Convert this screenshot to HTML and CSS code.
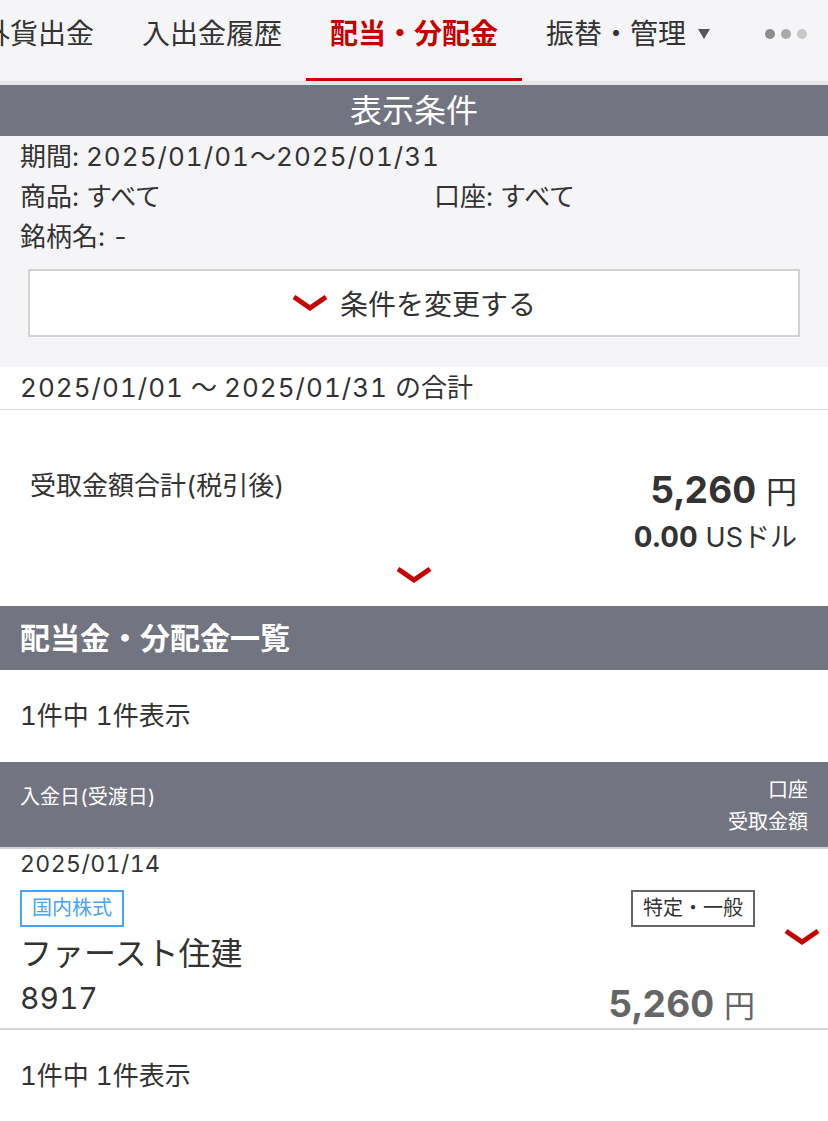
FILE: index.html
```html
<!DOCTYPE html>
<html lang="ja">
<head>
    <meta charset="UTF-8">
    <meta name="viewport" content="width=device-width, initial-scale=1.0">
    <title>配当・分配金</title>
    <link rel="stylesheet" href="styles.css">
</head>
<body>

    <nav class="tabs">
        <ul class="tab-list">
            <li class="tab">外貨出金</li>
            <li class="tab">入出金履歴</li>
            <li class="tab active">配当・分配金</li>
            <li class="tab">振替・管理<svg class="caret" viewBox="0 0 12 10"><polygon points="0,0 12,0 6,10"/></svg></li>
        </ul>
        <div class="more-dots"><span></span><span></span><span></span></div>
    </nav>

    <section class="conditions">
        <h2 class="bar-title">表示条件</h2>
        <div class="cond-body">
            <p>期間: <span class="num">2025/01/01</span>〜<span class="num">2025/01/31</span></p>
            <div class="cond-row">
                <p>商品: すべて</p>
                <p>口座: すべて</p>
            </div>
            <p>銘柄名: -</p>
            <button class="change-btn">
                <svg class="chevron" viewBox="0 0 36 18"><polyline points="2,3 18,14 34,3"/></svg>
                <span>条件を変更する</span>
            </button>
        </div>
    </section>

    <div class="range-total"><span class="num">2025/01/01</span> 〜 <span class="num">2025/01/31</span> の合計</div>

    <section class="summary">
        <div class="summary-main">
            <p class="summary-label">受取金額合計(税引後)</p>
            <div class="amounts">
                <p class="amount">5,260 <span class="unit">円</span></p>
                <p class="amount-sub">0.00 <span class="unit">USドル</span></p>
            </div>
        </div>
        <div class="summary-toggle">
            <svg class="chevron" viewBox="0 0 36 18"><polyline points="2,3 18,14 34,3"/></svg>
        </div>
    </section>

    <section class="list">
        <h2 class="list-title">配当金・分配金一覧</h2>
        <p class="count">1件中 1件表示</p>

        <div class="list-head">
            <span class="head-left">入金日(受渡日)</span>
            <div class="head-right">
                <span>口座</span>
                <span>受取金額</span>
            </div>
        </div>

        <div class="item">
            <div class="item-left">
                <p class="item-date"><span class="num">2025/01/14</span></p>
                <span class="tag tag-blue">国内株式</span>
                <p class="item-name">ファースト住建</p>
                <p class="item-code">8917</p>
            </div>
            <div class="item-right">
                <span class="tag tag-gray">特定・一般</span>
                <p class="item-amount">5,260 <span class="unit">円</span></p>
            </div>
            <svg class="chevron item-toggle" viewBox="0 0 36 18"><polyline points="2,3 18,14 34,3"/></svg>
        </div>

        <p class="count">1件中 1件表示</p>
    </section>

</body>
</html>
```

FILE: styles.css
```css
* {
    box-sizing: border-box;
}
body {
    margin: 0;
    font-family: Inter, "Noto Sans CJK JP", sans-serif;
    font-variant-numeric: tabular-nums;
    color: #333;
    background-color: #fff;
}
p {
    margin: 0;
}
.num {
    letter-spacing: 0.04em;
}

/* top tabs */
.tabs {
    display: flex;
    align-items: flex-start;
    height: 85px;
    background-color: #f5f5f7;
    border-bottom: 4px solid #e6e6e8;
    overflow: hidden;
    white-space: nowrap;
}
.tab-list {
    display: flex;
    margin: 0 0 0 -42px;
    padding: 0;
    list-style: none;
}
.tab {
    display: flex;
    align-items: flex-start;
    height: 81px;
    padding: 14px 24px 0;
    font-size: 28px;
    line-height: 40px;
    border-bottom: 3px solid transparent;
}
.tab.active {
    color: #c40000;
    font-weight: bold;
    border-bottom-color: #c40000;
}
.caret {
    width: 12px;
    height: 10px;
    margin: 15px 0 0 12px;
    fill: #555;
}
.more-dots {
    display: flex;
    gap: 6px;
    margin: 29px 0 0 31px;
}
.more-dots span {
    width: 10px;
    height: 10px;
    border-radius: 50%;
    background-color: #8c8c8c;
}
.more-dots span:nth-child(2) {
    background-color: #a9a9a9;
}
.more-dots span:nth-child(3) {
    background-color: #c8c8c8;
}

/* conditions */
.bar-title {
    margin: 0;
    height: 51px;
    background-color: #737482;
    color: #fff;
    font-size: 32px;
    font-weight: normal;
    line-height: 51px;
    text-align: center;
}
.cond-body {
    padding: 1px 20px 30px;
    background-color: #f5f5f7;
    font-size: 26px;
    line-height: 40px;
}
.cond-row {
    display: grid;
    grid-template-columns: 1fr 1fr;
    column-gap: 40px;
}
.change-btn {
    display: flex;
    align-items: center;
    justify-content: center;
    gap: 12px;
    width: calc(100% - 16px);
    height: 68px;
    margin: 12px 8px 0;
    background-color: #fff;
    border: 2px solid #d2d2d2;
    font-family: inherit;
    font-size: 28px;
    color: #333;
}
.chevron {
    width: 36px;
    height: 18px;
    fill: none;
    stroke: #c40000;
    stroke-width: 5;
}

.range-total {
    height: 43px;
    padding: 0 20px;
    font-size: 26px;
    line-height: 42px;
    border-bottom: 1px solid #d6d6d6;
}

/* summary */
.summary {
    padding: 56px 31px 22px 30px;
}
.summary-main {
    display: flex;
    justify-content: space-between;
    align-items: flex-start;
}
.summary-label {
    font-size: 26px;
    line-height: 40px;
}
.amounts {
    text-align: right;
}
.unit {
    font-weight: normal;
    line-height: 1;
}
.amount {
    font-size: 37px;
    font-weight: bold;
    line-height: 48px;
}
.amount .unit {
    font-size: 31px;
}
.amount-sub {
    font-size: 29px;
    font-weight: bold;
    line-height: 46px;
}
.amount-sub .unit {
    font-size: 27px;
}
.summary-toggle {
    display: flex;
    justify-content: center;
    margin-top: 6px;
}

/* list */
.list-title {
    margin: 0;
    height: 64px;
    padding-left: 20px;
    background-color: #737482;
    color: #fff;
    font-size: 30px;
    line-height: 64px;
}
.count {
    padding: 26px 20px;
    font-size: 26px;
    line-height: 40px;
}
.list-head {
    display: flex;
    justify-content: space-between;
    height: 87px;
    padding: 12px 20px 0;
    background-color: #737482;
    border-bottom: 2px solid #d4d4d4;
    color: #fff;
    font-size: 20px;
    line-height: 32px;
}
.head-left {
    margin-top: 7px;
}
.head-right {
    display: flex;
    flex-direction: column;
    align-items: flex-end;
}

.item {
    display: flex;
    padding: 0 8px 0 20px;
    border-bottom: 2px solid #d4d4d4;
}
.item-left {
    flex: 1;
    display: flex;
    flex-direction: column;
    align-items: flex-start;
    padding-bottom: 8px;
}
.item-date {
    font-size: 23px;
    line-height: 30px;
}
.item-date .num {
    letter-spacing: 0.02em;
}
.tag {
    height: 37px;
    padding: 0 10px;
    border: 2px solid;
    font-size: 20px;
    line-height: 33px;
}
.tag-blue {
    margin-top: 11px;
    border-color: #4ba2f6;
    color: #4ba2f6;
}
.tag-gray {
    border-color: #666;
    color: #333;
}
.item-name {
    margin-top: 5px;
    font-size: 32px;
    line-height: 44px;
}
.item-code {
    font-size: 30px;
    line-height: 44px;
}
.item-right {
    display: flex;
    flex-direction: column;
    align-items: flex-end;
    justify-content: space-between;
    padding-top: 41px;
    margin-right: 29px;
}
.item-amount {
    color: #666;
    font-size: 37px;
    font-weight: bold;
    line-height: 48px;
}
.item-amount .unit {
    font-size: 31px;
}
.item-toggle {
    align-self: center;
    margin-bottom: 3px;
}
```
